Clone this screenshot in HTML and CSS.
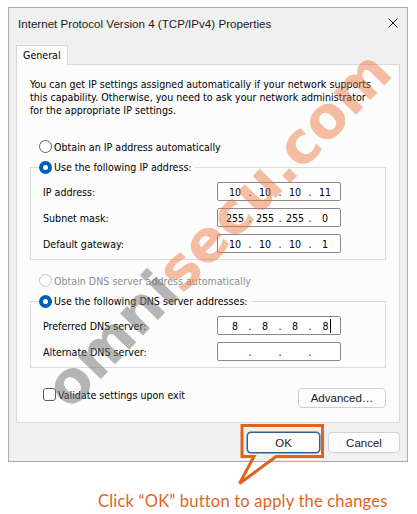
FILE: index.html
```html
<!DOCTYPE html>
<html lang="en">
<head>
  <meta charset="UTF-8" />
  <title>Internet Protocol Version 4 (TCP/IPv4) Properties</title>
  <link rel="stylesheet" href="styles.css">
</head>
<body>
  <div class="page">
    <div class="dialog">
      <div class="titlebar">
        <span class="title">Internet Protocol Version 4 (TCP/IPv4) Properties</span>
        <svg class="close" width="10" height="10" viewBox="0 0 10 10">
          <path d="M0.5 0.5 L9.5 9.5 M9.5 0.5 L0.5 9.5" stroke="#1b1b1b" stroke-width="1" fill="none" />
        </svg>
      </div>

      <div class="tabs">
        <div class="tab">General</div>
      </div>

      <div class="panel">
        <p class="intro">You can get IP settings assigned automatically if your network supports<br>this capability. Otherwise, you need to ask your network administrator<br>for the appropriate IP settings.</p>

        <div class="option"><span class="radio"></span>Obtain an IP address automatically</div>
        <fieldset class="group">
          <legend><span class="radio checked"></span>Use the following IP address:</legend>
          <div class="field">
            <span class="label">IP address:</span>
            <div class="ip"><span class="seg">10</span><span class="dot">.</span><span class="seg">10</span><span class="dot">.</span><span class="seg">10</span><span class="dot">.</span><span class="seg">11</span></div>
          </div>
          <div class="field">
            <span class="label">Subnet mask:</span>
            <div class="ip"><span class="seg">255</span><span class="dot">.</span><span class="seg">255</span><span class="dot">.</span><span class="seg">255</span><span class="dot">.</span><span class="seg">0</span></div>
          </div>
          <div class="field">
            <span class="label">Default gateway:</span>
            <div class="ip"><span class="seg">10</span><span class="dot">.</span><span class="seg">10</span><span class="dot">.</span><span class="seg">10</span><span class="dot">.</span><span class="seg">1</span></div>
          </div>
        </fieldset>

        <div class="option disabled after-group"><span class="radio"></span>Obtain DNS server address automatically</div>
        <fieldset class="group">
          <legend><span class="radio checked"></span>Use the following DNS server addresses:</legend>
          <div class="field">
            <span class="label">Preferred DNS server:</span>
            <div class="ip"><span class="seg">8</span><span class="dot">.</span><span class="seg">8</span><span class="dot">.</span><span class="seg">8</span><span class="dot">.</span><span class="seg"><span class="caret">8</span></span></div>
          </div>
          <div class="field">
            <span class="label">Alternate DNS server:</span>
            <div class="ip"><span class="seg"></span><span class="dot">.</span><span class="seg"></span><span class="dot">.</span><span class="seg"></span><span class="dot">.</span><span class="seg"></span></div>
          </div>
        </fieldset>

        <div class="panel-bottom">
          <div class="check-row"><span class="checkbox"></span>Validate settings upon exit</div>
          <button class="btn advanced">Advanced…</button>
        </div>
      </div>

      <div class="footer">
        <button class="btn ok">OK</button>
        <button class="btn cancel">Cancel</button>
      </div>
    </div>

    <p class="note">Click “OK” button to apply the changes</p>

    <!-- overlays: watermark and callout -->
    <div class="watermark"><span class="wm-gray">omni</span><span class="wm-orange">secu.com</span></div>
    <svg class="callout" width="417" height="514" viewBox="0 0 417 514">
      <path d="M254 456.5 L242 456.5 L242 425.5 L322.5 425.5 L322.5 456.5 L276 456.5 L239.5 483.5 Z" fill="none" stroke="#e0621c" stroke-width="3" stroke-linejoin="miter" />
    </svg>
  </div>
</body>
</html>
```

FILE: styles.css
```css
body {
  margin: 0;
  background: #fff;
  font-family: "DejaVu Sans Condensed", "DejaVu Sans", sans-serif;
  font-stretch: condensed;
  font-size: 10.6px;
  color: #000;
}
.page {
  position: relative;
  width: 417px;
  height: 514px;
  padding: 7px 0 0 8px;
  box-sizing: border-box;
  overflow: hidden;
}
.dialog {
  width: 400px;
  box-sizing: border-box;
  border: 1px solid #ababab;
  background: #f0f0f0;
  padding-bottom: 8px;
}
.titlebar {
  height: 30px;
  display: flex;
  align-items: center;
  justify-content: space-between;
  padding: 0 9px;
  font-family: "Liberation Sans", sans-serif;
  font-stretch: normal;
  font-size: 11.6px;
  color: #1a1a1a;
}
.tabs {
  margin-top: 7px;
  padding-left: 7px;
  display: flex;
}
.tab {
  position: relative;
  z-index: 1;
  width: 52px;
  height: 20px;
  box-sizing: border-box;
  border: 1px solid #d9d9d9;
  border-bottom: none;
  background: #fcfcfc;
  padding-left: 6px;
  line-height: 19px;
  margin-bottom: -1px;
}
.panel {
  margin: 0 7px;
  border: 1px solid #d9d9d9;
  background: #fcfcfc;
  padding: 13px 13px 14px;
}
.intro {
  margin: 0;
  line-height: 13px;
  white-space: nowrap;
}
.option {
  display: flex;
  align-items: center;
  height: 15px;
  margin: 22px 0 0 9px;
}
.option.after-group {
  margin-top: 13px;
}
.option.disabled {
  color: #8d8d8d;
}
.radio {
  display: inline-block;
  width: 13px;
  height: 13px;
  box-sizing: border-box;
  border: 1px solid #5f5f5f;
  border-radius: 50%;
  background: #fff;
  margin-right: 2px;
  vertical-align: -3px;
}
.disabled .radio {
  border-color: #c4c4c4;
}
.radio.checked {
  border: 4px solid #005fb8;
  background: #fff;
}
.group {
  margin: 6px 0 0;
  border: 1px solid #dcdcdc;
  padding: 7px 12px 6px;
  min-width: 0;
}
.group legend {
  margin-left: -4px;
  padding: 0 3px 0 0;
  line-height: 15px;
  height: 15px;
}
.field {
  display: flex;
  align-items: center;
  height: 19px;
}
.field + .field {
  margin-top: 7px;
}
.label {
  width: 174px;
}
.ip {
  width: 124px;
  height: 19px;
  box-sizing: border-box;
  border: 1px solid #8a8a8a;
  border-radius: 2px;
  background: #fff;
  display: flex;
  align-items: center;
  padding-left: 6px;
}
.seg {
  width: 22px;
  text-align: center;
}
.dot {
  width: 8px;
  text-align: center;
}
.caret {
  border-right: 1px solid #000;
  padding: 1px 1px 1px 0;
  margin-left: 3px;
}
.panel-bottom {
  display: flex;
  justify-content: space-between;
  align-items: flex-start;
  margin-top: 20px;
  padding-left: 13px;
}
.check-row {
  display: flex;
  align-items: center;
  height: 13px;
}
.checkbox {
  width: 13px;
  height: 13px;
  box-sizing: border-box;
  border: 1px solid #5f5f5f;
  border-radius: 3px;
  background: #fff;
  margin-right: 2px;
}
.btn {
  font-family: "Liberation Sans", sans-serif;
  font-size: 11.5px;
  color: #1a1a1a;
  background: #fdfdfd;
  border: 1px solid #d0d0d0;
  border-radius: 4px;
  padding: 0;
  box-sizing: border-box;
}
.advanced {
  width: 88px;
  height: 20px;
}
.footer {
  display: flex;
  justify-content: flex-end;
  gap: 8px;
  padding: 9px 7px 0;
}
.ok,
.cancel {
  height: 21px;
}
.ok {
  width: 73px;
  border-color: #30608f;
  box-shadow: 0 0 0 0.5px #30608f;
}
.cancel {
  width: 72px;
}
.note {
  margin: 29px 0 0 90px;
  font-family: Lato, sans-serif;
  font-stretch: normal;
  font-size: 16.5px;
  letter-spacing: 0.2px;
  line-height: 20px;
  color: #e0641f;
  white-space: nowrap;
}
.watermark {
  position: absolute;
  left: 218px;
  top: 229px;
  transform: translate(-50%, -50%) rotate(-46deg);
  font-family: "DejaVu Sans", sans-serif;
  font-stretch: normal;
  font-weight: bold;
  font-size: 58px;
  line-height: 1;
  white-space: nowrap;
  pointer-events: none;
}
.wm-gray {
  color: rgba(110, 110, 110, 0.5);
}
.wm-orange {
  color: rgba(236, 110, 50, 0.45);
}
.callout {
  position: absolute;
  left: 0;
  top: 0;
  pointer-events: none;
}
```
